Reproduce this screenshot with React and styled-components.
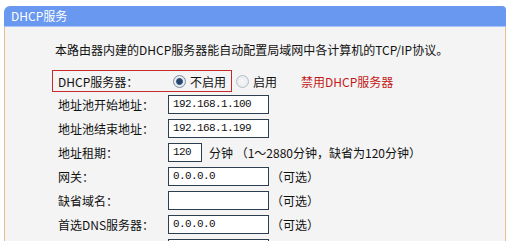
import React from 'react';
import styled, { createGlobalStyle } from 'styled-components';

const GlobalStyle = createGlobalStyle`
  html, body {
    margin: 0;
    padding: 0;
    background: #ffffff;
    overflow: hidden;
  }
  body {
    font-family: 'Noto Sans CJK SC', 'Noto Sans', sans-serif;
    font-size: 12px;
    color: #111;
  }
`;

const Page = styled.div`
  padding: 6px 5px 0 4px;
  height: 241px;
  box-sizing: border-box;
  overflow: hidden;
`;

const Panel = styled.div`
  width: 502px;
  height: 300px;
  display: flex;
  flex-direction: column;
`;

const Header = styled.div`
  height: 20px;
  display: flex;
  align-items: center;
  padding-left: 7px;
  background: #6898ef;
  border-radius: 6px 4px 0 0;
  border-bottom: 1px solid #a9c4f6;
  color: #fff;
  font-size: 12px;
  line-height: 20px;
`;

const Body = styled.div`
  flex: 1;
  background: #f4f4f4;
  border-left: 1px solid #e6bf8c;
  border-right: 1px solid #e6bf8c;
  padding: 15px 0 0 47px;
`;

const Intro = styled.p`
  margin: 0 0 12px 3px;
  line-height: 16px;
  white-space: nowrap;
`;

const Form = styled.div`
  display: flex;
  flex-direction: column;
`;

const Row = styled.div`
  display: grid;
  grid-template-columns: 110px auto;
  align-items: center;
  height: 24px;
  padding-left: 6px;
  white-space: nowrap;
`;

const SwitchRow = styled.div`
  display: flex;
  align-items: center;
  height: 22px;
  white-space: nowrap;
`;

const HighlightBox = styled.div`
  display: grid;
  grid-template-columns: 110px auto;
  align-items: center;
  width: 180px;
  height: 22px;
  box-sizing: border-box;
  border: 1px solid #c62b2b;
  padding-left: 5px;
`;

const Control = styled.div`
  display: flex;
  align-items: center;
`;

const RadioLabel = styled.label`
  display: flex;
  align-items: center;
  margin-left: ${({ $ml }) => $ml || 0}px;
`;

const Radio = styled.span`
  display: inline-block;
  box-sizing: border-box;
  width: 13px;
  height: 13px;
  border-radius: 50%;
  margin-right: 4px;
  border: 1px solid ${({ $checked }) => ($checked ? '#7f8fa2' : '#b4bcc6')};
  background: ${({ $checked }) =>
    $checked
      ? 'radial-gradient(circle, #27476e 0 2.6px, #5b7596 3.2px, #e8ecf1 3.8px, #dfe4ea 100%)'
      : 'radial-gradient(circle, #f6f7f9 0, #e4e8ec 100%)'};
`;

const Hint = styled.span`
  color: #c41818;
  margin-left: 24px;
`;

const Field = styled.input`
  box-sizing: border-box;
  width: ${({ $w }) => $w}px;
  height: 19px;
  margin: 0;
  padding: 0 0 0 4px;
  border: 1px solid #2d3e51;
  background: #fff;
  font-family: 'Liberation Mono', 'DejaVu Sans Mono', monospace;
  font-size: 11px;
  letter-spacing: -0.6px;
  color: #111;
  outline: none;
`;

const Note = styled.span`
  margin-left: ${({ $ml }) => $ml || 0}px;
`;

const rows = [
  { label: '地址池开始地址：', value: '192.168.1.100' },
  { label: '地址池结束地址：', value: '192.168.1.199' },
  { label: '地址租期：', value: '120', width: 34, note: '分钟 （1～2880分钟，缺省为120分钟）', noteGap: 7 },
  { label: '网关：', value: '0.0.0.0', note: '（可选）' },
  { label: '缺省域名：', value: '', note: '（可选）' },
  { label: '首选DNS服务器：', value: '0.0.0.0', note: '（可选）' },
  { label: '', value: '', id: 'next' },
];

export default function App() {
  return (
    <>
      <GlobalStyle />
      <Page>
        <Panel>
          <Header>DHCP服务</Header>
          <Body>
            <Intro>本路由器内建的DHCP服务器能自动配置局域网中各计算机的TCP/IP协议。</Intro>
            <Form>
              <SwitchRow>
                <HighlightBox>
                  <span>DHCP服务器：</span>
                  <RadioLabel $ml={5}>
                    <Radio $checked />
                    不启用
                  </RadioLabel>
                </HighlightBox>
                <RadioLabel $ml={4}>
                  <Radio />
                  启用
                </RadioLabel>
                <Hint>禁用DHCP服务器</Hint>
              </SwitchRow>
              {rows.map((r) => (
                <Row key={r.id || r.label}>
                  <span>{r.label}</span>
                  <Control>
                    <Field $w={r.width || 101} defaultValue={r.value} readOnly />
                    {r.note && <Note $ml={r.noteGap || 2}>{r.note}</Note>}
                  </Control>
                </Row>
              ))}
            </Form>
          </Body>
        </Panel>
      </Page>
    </>
  );
}
